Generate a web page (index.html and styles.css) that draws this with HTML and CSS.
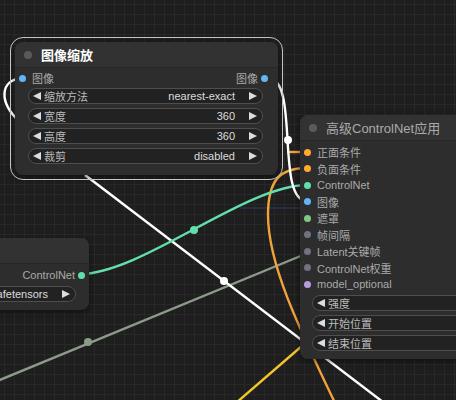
FILE: index.html
```html
<!DOCTYPE html>
<html lang="zh">
<head>
  <meta charset="UTF-8">
  <title>节点图</title>
  <link rel="stylesheet" href="styles.css">
</head>
<body>

<div class="canvas">
  <svg class="links" width="456" height="400" viewBox="0 0 456 400">
    <!-- 背后的连线 -->
    <path class="link dim" d="M240,208 L300,208"/>
    <path class="link olive" d="M-10,384 L320,248"/>
    <path class="link white" d="M85,175 L400,415"/>
    <path class="link yellow" d="M236,403 L310,339"/>
    <path class="link orange" d="M287,152 L307,152"/>
    <path class="link orange" d="M307,168 C280,168 268,180 268,215 C268,265 300,330 336,405"/>
    <path class="link white" d="M20,122 C-2,102 0,80 22,78"/>
    <path class="link teal" d="M80,274 C141,274 246,185 307,185"/>
    <path class="link white" d="M268,78 C300,78 275,201 307,201"/>
    <circle class="mid white" cx="288" cy="140" r="4"/>
    <circle class="mid teal" cx="194" cy="230" r="4"/>
    <circle class="mid white" cx="224" cy="281" r="4"/>
    <circle class="mid olive" cx="88" cy="342" r="4"/>
  </svg>

  <!-- 左侧只露出一部分的节点 -->
  <div class="node node-loader">
    <div class="node-title"></div>
    <div class="node-body">
      <div class="slot-row">
        <div class="slot out">ControlNet<i class="dot cnet"></i></div>
      </div>
      <div class="widget">
        <span class="w-value">control_v11p_sd15_openpose.safetensors</span>
        <span class="arrow right"></span>
      </div>
    </div>
  </div>

  <div class="node node-scale selected">
    <div class="node-title"><span class="title-dot"></span>图像缩放</div>
    <div class="node-body">
      <div class="slot-row">
        <div class="slot in"><i class="dot image"></i>图像</div>
        <div class="slot out">图像<i class="dot image"></i></div>
      </div>
      <div class="widget"><span class="arrow left"></span><span class="w-label">缩放方法</span><span class="w-value">nearest-exact</span><span class="arrow right"></span></div>
      <div class="widget"><span class="arrow left"></span><span class="w-label">宽度</span><span class="w-value">360</span><span class="arrow right"></span></div>
      <div class="widget"><span class="arrow left"></span><span class="w-label">高度</span><span class="w-value">360</span><span class="arrow right"></span></div>
      <div class="widget"><span class="arrow left"></span><span class="w-label">裁剪</span><span class="w-value">disabled</span><span class="arrow right"></span></div>
    </div>
  </div>

  <div class="node node-apply">
    <div class="node-title"><span class="title-dot"></span>高级ControlNet应用</div>
    <div class="node-body">
      <div class="inputs">
        <div class="slot in"><i class="dot cond"></i>正面条件</div>
        <div class="slot in"><i class="dot cond"></i>负面条件</div>
        <div class="slot in"><i class="dot cnet"></i>ControlNet</div>
        <div class="slot in"><i class="dot image"></i>图像</div>
        <div class="slot in"><i class="dot mask"></i>遮罩</div>
        <div class="slot in"><i class="dot none"></i>帧间隔</div>
        <div class="slot in"><i class="dot none"></i>Latent关键帧</div>
        <div class="slot in"><i class="dot none"></i>ControlNet权重</div>
        <div class="slot in"><i class="dot model"></i>model_optional</div>
      </div>
      <div class="widget"><span class="arrow left"></span><span class="w-label">强度</span></div>
      <div class="widget"><span class="arrow left"></span><span class="w-label">开始位置</span></div>
      <div class="widget"><span class="arrow left"></span><span class="w-label">结束位置</span></div>
    </div>
  </div>
</div>

</body>
</html>
```

FILE: styles.css
```css
body {
  margin: 0;
  background: #1e1e1e;
  font-family: "Liberation Sans", Arial, "Noto Sans CJK SC", sans-serif;
}

.canvas {
  position: relative;
  width: 456px;
  height: 400px;
  overflow: hidden;
  background-color: #1e1e1e;
  background-image:
    linear-gradient(#282828 1px, transparent 1px),
    linear-gradient(90deg, #282828 1px, transparent 1px);
  background-size: 10px 10px;
  background-position: 4px 4px;
}

.links {
  position: absolute;
  left: 0;
  top: 0;
}

.link {
  fill: none;
  stroke-width: 2.4;
}

.link.white { stroke: #ffffff; }
.link.teal { stroke: #62dfac; }
.link.olive { stroke: #8c9a8a; }
.link.orange { stroke: #f2a23a; }
.link.yellow { stroke: #f2c52a; }
.link.dim { stroke: #28344a; stroke-width: 1.5; }

.mid.white { fill: #ffffff; }
.mid.teal { fill: #62dfac; }
.mid.olive { fill: #8c9a8a; }

/* 节点 */
.node {
  position: absolute;
  background: #2d2d2d;
  border-radius: 8px;
  box-shadow: 0 2px 6px rgba(0, 0, 0, 0.5);
  color: #aaa;
  font-size: 11px;
}

.node.selected {
  outline: 1.5px solid #c4c4c4;
  outline-offset: 4px;
}

.node-title {
  height: 25px;
  display: flex;
  align-items: center;
  padding-left: 9px;
  background: #323232;
  border-radius: 8px 8px 0 0;
  border-bottom: 1px solid #262626;
  font-size: 13px;
  color: #aaa;
}

.title-dot {
  width: 8px;
  height: 8px;
  border-radius: 50%;
  background: #5a5a5a;
  margin-right: 9px;
}

.selected .node-title {
  color: #fff;
  font-weight: bold;
}

.node-body {
  display: flex;
  flex-direction: column;
}

.slot-row {
  display: flex;
  justify-content: space-between;
  height: 16px;
}

.slot {
  display: flex;
  align-items: center;
  height: 16px;
  white-space: nowrap;
}

.dot {
  width: 7px;
  height: 7px;
  border-radius: 50%;
}

.slot.in .dot { margin-right: 6px; }
.slot.out .dot { margin-left: 3px; }

.dot.image { background: #64b5f6; }
.dot.cond { background: #ffa931; }
.dot.cnet { background: #5fe0ab; }
.dot.mask { background: #81c784; }
.dot.none { background: #717180; }
.dot.model { background: #b39ddb; }

.widget {
  display: flex;
  align-items: center;
  height: 16px;
  box-sizing: border-box;
  background: #222;
  border: 1px solid #4e4e4e;
  border-radius: 8px;
  padding: 0 5px 0 4px;
  color: #ddd;
  white-space: nowrap;
  overflow: hidden;
}

.w-label {
  margin-left: 3px;
  color: #bbb;
}

.w-value {
  margin-left: auto;
  margin-right: 14px;
}

.arrow {
  width: 0;
  height: 0;
  border-top: 4.5px solid transparent;
  border-bottom: 4.5px solid transparent;
  flex-shrink: 0;
}

.arrow.left { border-right: 8px solid #ddd; }
.arrow.right { border-left: 8px solid #ddd; }

/* 图像缩放 */
.node-scale {
  left: 15px;
  top: 42px;
  width: 263px;
  height: 133px;
}

.node-scale .node-body {
  padding: 2px 10px 0 4px;
  gap: 4px;
}

.node-scale .slot-row {
  margin-bottom: -2px;
}

.node-scale .widget {
  margin-left: 9px;
  margin-right: 5px;
}

/* 高级ControlNet应用 */
.node-apply {
  left: 300px;
  top: 115px;
  width: 180px;
  height: 244px;
}

.node-apply .node-body {
  padding: 3px 0 0 4px;
}

.node-apply .inputs {
  display: flex;
  flex-direction: column;
  margin-bottom: 2px;
}

.node-apply .slot {
  height: 16.5px;
}

.node-apply .widget {
  margin-left: 8px;
  margin-bottom: 4px;
  margin-right: -20px;
}

/* 左侧节点 */
.node-loader {
  left: -120px;
  top: 238px;
  width: 209px;
  height: 72px;
}

.node-loader .node-body {
  padding: 3px 4px 0 0;
  gap: 3px;
}

.node-loader .slot-row {
  justify-content: flex-end;
}

.node-loader .widget {
  justify-content: flex-end;
  margin-right: 9px;
  width: 196px;
  margin-left: auto;
}

.node-loader .w-value {
  margin-right: 14px;
}
```
